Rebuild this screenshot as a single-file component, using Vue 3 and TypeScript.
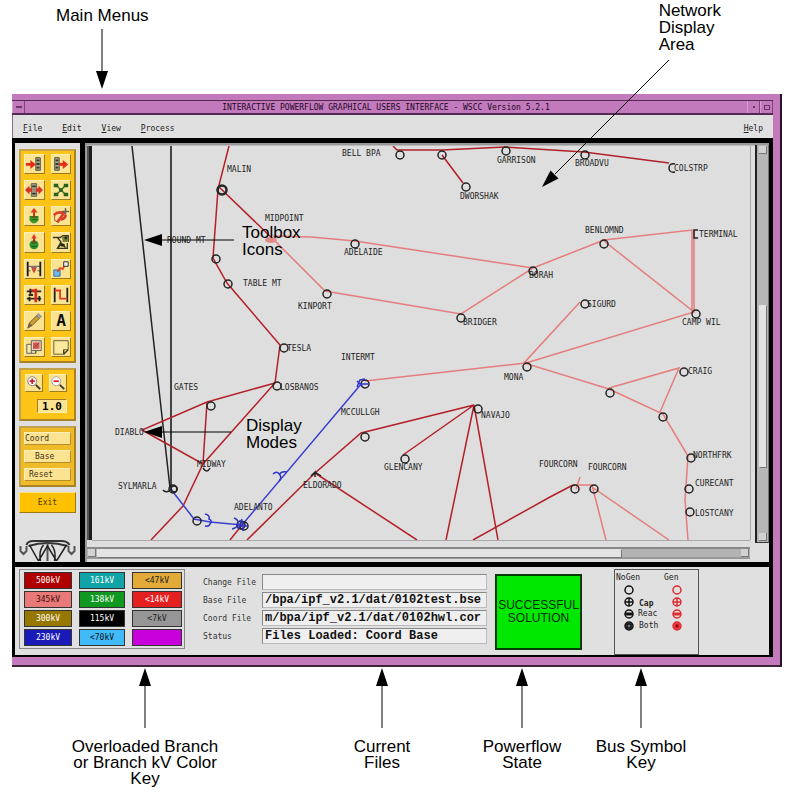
<script setup lang="ts">
interface Label { x: number; y: number; text: string }
interface Branch { kind: string; points: string }

const menus: string[] = ['File', 'Edit', 'View', 'Process']

const branches: Branch[] = [
  { kind: 'dc', points: '132,146 154,345 170,488' },
  { kind: 'dc wide', points: '171,146 171,488' },
  { kind: 'kv500', points: '229,146 218,189 213,258 227,283 280,345 275,383 203,464 183,506 151,540' },
  { kind: 'kv500', points: '219,187 273,239' },
  { kind: 'kv500', points: '275,383 207,402 142,430 203,464 207,402' },
  { kind: 'kv500', points: '393,146 397,150 442,150 505,147 584,152 669,163' },
  { kind: 'kv500', points: '442,155 463,183' },
  { kind: 'kv500', points: '247,540 315,473 361,433 474,405 403,455' },
  { kind: 'kv500', points: '315,473 417,540' },
  { kind: 'kv500', points: '446,540 474,405 498,540' },
  { kind: 'kv500', points: '473,540 550,497 573,485' },
  { kind: 'kv500', points: '230,540 242,525' },
  { kind: 'kv345', points: '273,239 325,291 461,314 533,268 604,240 692,230 692,312' },
  { kind: 'kv345', points: '694,230 694,312' },
  { kind: 'kv345', points: '273,236 311,237 355,241 533,268' },
  { kind: 'kv345', points: '604,241 694,312 526,363 365,381' },
  { kind: 'kv345', points: '580,302 524,363 609,389 663,414 688,456 685,500 688,540' },
  { kind: 'kv345', points: '609,388 679,368 660,412' },
  { kind: 'kv345', points: '573,485 592,485 606,540' },
  { kind: 'kv345', points: '592,487 669,540' },
  { kind: 'kv345', points: '580,477 576,489' },
  { kind: 'kv230', points: '170,488 194,519 210,522 242,525 362,383' },
]

const buses: [number, number][] = [
  [400, 155], [442, 155], [506, 151], [585, 155], [466, 187], [222, 190], [216, 259], [228, 284],
  [355, 244], [327, 294], [533, 271], [461, 318], [604, 244], [585, 304], [696, 314], [527, 367],
  [610, 393], [684, 372], [663, 417], [691, 458], [689, 489], [690, 512], [284, 348], [277, 386],
  [211, 406], [365, 384], [365, 437], [405, 459], [478, 409], [575, 489], [594, 489], [197, 521],
  [244, 526], [173, 489],
]

const labels: Label[] = [
  { x: 342, y: 153, text: 'BELL BPA' }, { x: 497, y: 160, text: 'GARRISON' },
  { x: 575, y: 163, text: 'BROADVU' }, { x: 674, y: 168, text: 'COLSTRP' },
  { x: 699, y: 234, text: 'TERMINAL' }, { x: 460, y: 196, text: 'DWORSHAK' },
  { x: 227, y: 169, text: 'MALIN' }, { x: 265, y: 218, text: 'MIDPOINT' },
  { x: 167, y: 240, text: 'ROUND MT' }, { x: 243, y: 283, text: 'TABLE MT' },
  { x: 344, y: 252, text: 'ADELAIDE' }, { x: 298, y: 306, text: 'KINPORT' },
  { x: 529, y: 275, text: 'BORAH' }, { x: 585, y: 230, text: 'BENLOMND' },
  { x: 587, y: 304, text: 'SIGURD' }, { x: 682, y: 322, text: 'CAMP WIL' },
  { x: 463, y: 322, text: 'BRIDGER' }, { x: 287, y: 348, text: 'TESLA' },
  { x: 280, y: 387, text: 'LOSBANOS' }, { x: 341, y: 357, text: 'INTERMT' },
  { x: 174, y: 387, text: 'GATES' }, { x: 341, y: 412, text: 'MCCULLGH' },
  { x: 504, y: 377, text: 'MONA' }, { x: 688, y: 371, text: 'CRAIG' },
  { x: 481, y: 415, text: 'NAVAJO' }, { x: 115, y: 432, text: 'DIABLO' },
  { x: 197, y: 464, text: 'MIDWAY' }, { x: 118, y: 486, text: 'SYLMARLA' },
  { x: 234, y: 507, text: 'ADELANTO' }, { x: 303, y: 485, text: 'ELDORADO' },
  { x: 384, y: 467, text: 'GLENCANY' }, { x: 539, y: 464, text: 'FOURCORN' },
  { x: 588, y: 467, text: 'FOURCORN' }, { x: 693, y: 455, text: 'NORTHFRK' },
  { x: 695, y: 483, text: 'CURECANT' }, { x: 695, y: 513, text: 'LOSTCANY' },
]

const kvKey: { text: string; tone: string }[] = [
  { text: '500kV', tone: 'k500' }, { text: '161kV', tone: 'k161' }, { text: '<47kV', tone: 'k47' },
  { text: '345kV', tone: 'k345' }, { text: '138kV', tone: 'k138' }, { text: '<14kV', tone: 'k14' },
  { text: '300kV', tone: 'k300' }, { text: '115kV', tone: 'k115' }, { text: '<7kV', tone: 'k7' },
  { text: '230kV', tone: 'k230' }, { text: '<70kV', tone: 'k70' }, { text: '', tone: 'kover' },
]

const files: { id: string; label: string; value: string }[] = [
  { id: 'change', label: 'Change File', value: '' },
  { id: 'base', label: 'Base File', value: '/bpa/ipf_v2.1/dat/0102test.bse' },
  { id: 'coord', label: 'Coord File', value: 'm/bpa/ipf_v2.1/dat/0102hwl.cor' },
  { id: 'status', label: 'Status', value: 'Files Loaded: Coord Base' },
]

const captions: string[][] = [
  ['Overloaded Branch', 'or Branch kV Color', 'Key'],
  ['Current', 'Files'],
  ['Powerflow', 'State'],
  ['Bus Symbol', 'Key'],
]

// Toolbox drawings on a 20 x 20 grid, in reading order
const tools: { name: string; art: string }[] = [
  { name: 'Insert left', art: '<path d="M12 3h5v14h-5z" fill="#aaa98a" stroke="#454538"/><path d="M13 6h3M13 10h3M13 14h3" stroke="#333" stroke-width="2"/><path d="M1 9h5V5.500l6 5-6 5V12H1z" fill="#e62a18"/>' },
  { name: 'Insert right', art: '<path d="M3 3h5v14H3z" fill="#aaa98a" stroke="#454538"/><path d="M4 6h3M4 10h3M4 14h3" stroke="#333" stroke-width="2"/><path d="M8 9h4V5.500l6 5-6 5V12H8z" fill="#e62a18"/>' },
  { name: 'Move', art: '<path d="M7 3h6v14H7z" fill="#aaa98a" stroke="#555547"/><path d="M8 6h4M8 14h4" stroke="#333" stroke-width="2"/><path d="M0 10l5-5v3h3v4H5v3zM20 10l-5-5v3h-3v4h3v3z" fill="#d93324"/><path d="M8 8h4v4H8z" fill="#998c76"/>' },
  { name: 'Network', art: '<path d="M5 5l10 10M15 5L5 15" stroke="#387024" stroke-width="1.500"/><path d="M2 3h5v4H2zM13 3h5v4h-5zM2 13h5v4H2zM13 13h5v4h-5zM8 8h4v4H8z" fill="#25601f"/>' },
  { name: 'Add generator', art: '<path d="M5 10h10v5l-3 3H8l-3-3z" fill="#3d9829"/><path d="M6 11h8M7 14h7" stroke="#1b611b"/><path d="M10 12V5" stroke="#b92516" stroke-width="2"/><path d="M6 6l4-5 4 5z" fill="#e63a20"/>' },
  { name: 'Reroute', art: '<path d="M2 9Q7 4 13 7L6 17M10 14q5-1 5-5" fill="none" stroke="#d8402c" stroke-width="3"/><path d="M3 9v6l4 2" fill="none" stroke="#a5402c"/><path d="M15 1v8M11 5h8" fill="none" stroke="#696452" stroke-width="1.500"/>' },
  { name: 'Add load', art: '<circle cx="10" cy="13" r="5" fill="#2e922c"/><path d="M7 11h6M7 15h6" stroke="#176323"/><path d="M10 11V5" stroke="#b92516" stroke-width="2"/><path d="M7 6l3-5 3 5z" fill="#e63a20"/>' },
  { name: 'Area outline', art: '<path d="M1 5h8l3-2h6v7M6 5l4 5-4 7h11v-6M6 17l5-5M9 10l6 6" fill="none" stroke="#393b20" stroke-width="1.500"/><path d="M11 4h6v6h-5z" fill="#74813b"/><path d="M10 12h4v3h-4zM14 4h3v3h-3z" fill="#252a18"/>' },
  { name: 'Section', art: '<path d="M3 2v16M17 2v16" stroke="#181818" stroke-width="2"/><path d="M3 7h14M3 12h3M14 12h3" stroke="#444"/><path d="M6 7h8l-4 7z" fill="#648199"/><path d="M8 8h4v3l-2 4-2-4z" fill="#d54635"/>' },
  { name: 'Connect buses', art: '<path d="M2 11h7v7H2z" fill="#70b8ed" stroke="#286998"/><path d="M6 13l3-4 3 1 3-6" fill="none" stroke="#e34228" stroke-width="2"/><path d="M13 2h5v5h-5z" fill="#eee" stroke="#222"/>' },
  { name: 'Transformer', art: '<path d="M2 6h16M2 14h16M4 10h5" stroke="#332923" stroke-width="2"/><path d="M12 3v15M7 5h6" stroke="#d82a20" stroke-width="3"/><path d="M6 3v6M5 12v5M16 11v6" stroke="#222" stroke-width="2"/>' },
  { name: 'Line', art: '<path d="M3 2v16M17 2v16" stroke="#222" stroke-width="2"/><path d="M3 5h6v9h8" fill="none" stroke="#e33c24" stroke-width="2"/>' },
  { name: 'Edit', art: '<path d="M3 18l2-6 8-8 3 3-8 8z" fill="#ce9d31" stroke="#6c572f"/><path d="M13 4l2-2 3 3-2 2z" fill="#aaa" stroke="#777"/><path d="M3 18l2-6 3 3z" fill="#756245"/>' },
  { name: 'Text', art: '<text x="10" y="16" text-anchor="middle" font-family="DejaVu Sans Mono, monospace" font-weight="bold" font-size="18" fill="#111">A</text>' },
  { name: 'Copy view', art: '<path d="M2 7h10v10H2z" fill="#f6eaa6" stroke="#555"/><path d="M7 3h11v11H7z" fill="#f7d2bd" stroke="#555"/><path d="M9 5h7v7H9z" fill="#dc5144"/><path d="M9 12l7-7M7 14v3M12 14v3" stroke="#555"/>' },
  { name: 'Note', art: '<path d="M2 3h16v10h-5v5H2z" fill="#fbe99c" stroke="#66562b"/><path d="M13 18l5-5M13 13v5" stroke="#4c401e" stroke-width="1.500"/>' },
]
</script>

<template>
  <div class="page">
    <header class="notes-top">
      <div class="note main-menus">
        <span>Main Menus</span>
        <svg class="down" width="14" height="60" viewBox="0 0 14 60" aria-hidden="true">
          <path d="M7 0v44" stroke="#000" /><path d="M1 42h12L7 60z" />
        </svg>
      </div>
      <div class="note network-note">
        <span>Network</span><span>Display</span><span>Area</span>
        <svg class="diagonal" width="130" height="130" viewBox="0 0 130 130" aria-hidden="true">
          <path d="M128 2L14 116" stroke="#000" /><path d="M1 129L9.500 112.500 17.500 120.500z" />
        </svg>
      </div>
    </header>

    <main class="window">
      <div class="titlebar">
        <button class="wm" type="button" aria-label="Window menu"><i></i></button>
        <h1>INTERACTIVE POWERFLOW GRAPHICAL USERS INTERFACE - WSCC Version 5.2.1</h1>
        <button class="wm" type="button" aria-label="Minimize"><i class="dot"></i></button>
        <button class="wm" type="button" aria-label="Maximize"><i class="square"></i></button>
      </div>
      <nav class="menubar">
        <button v-for="m in menus" :key="m" type="button"><u>{{ m[0] }}</u>{{ m.slice(1) }}</button>
        <button class="help" type="button"><u>H</u>elp</button>
      </nav>

      <div class="body">
        <div class="work">
          <aside class="side">
            <div class="gold toolbox">
              <button v-for="t in tools" :key="t.name" class="tool" type="button" :aria-label="t.name">
                <svg viewBox="0 0 20 20" v-html="t.art"></svg>
              </button>
            </div>
            <div class="gold zoom">
              <button class="tool" type="button" aria-label="Zoom in">
                <svg viewBox="0 0 18 18"><circle cx="7" cy="7" r="5" fill="#fff" stroke="#777" /><path d="M4 7h6M7 4v6" stroke="#d6202c" stroke-width="2" /><path d="M11 11l5 5" stroke="#333" stroke-width="2" /></svg>
              </button>
              <button class="tool" type="button" aria-label="Zoom out">
                <svg viewBox="0 0 18 18"><circle cx="7" cy="7" r="5" fill="#fff" stroke="#999" /><path d="M4 7h6" stroke="#d6202c" stroke-width="2" /><path d="M11 11l5 5" stroke="#333" stroke-width="2" /></svg>
              </button>
              <input class="factor" value="1.0" aria-label="Zoom factor">
            </div>
            <div class="gold modes">
              <button type="button">Coord</button>
              <button class="mid" type="button">Base</button>
              <button class="low" type="button">Reset</button>
            </div>
            <button class="exit" type="button">Exit</button>
            <svg class="logo" viewBox="0 0 56 22" aria-hidden="true">
              <path d="M7 6Q8 2 14 2h28q6 0 8 4M9 7Q28 1 48 7" fill="none" stroke="#333" stroke-width="2" />
              <path d="M1 7v5l3 3 3-3V7M49 7v5l3 3 3-3V7M28 4v18" fill="none" stroke="#555" stroke-width="2" />
              <path d="M10 6l9 16L28 7l9 15 10-16M21 22Q19 12 24 6M35 22Q37 12 32 6" fill="none" stroke="#222" stroke-width="1.500" />
            </svg>
          </aside>

          <section class="display">
            <svg class="map" viewBox="92 146 658 394" role="img" aria-label="Network display">
              <polyline v-for="(b, i) in branches" :key="i" :class="b.kind" :points="b.points" />
              <g class="buses">
                <circle v-for="([cx, cy], i) in buses" :key="i" :cx="cx" :cy="cy" r="4" />
                <circle cx="222" cy="190" r="5" />
                <circle cx="174" cy="489" r="3" />
                <circle cx="241" cy="525" r="4" />
                <path d="M675 164q-6-1-6 4t6 4M698 230h-4v8h4M203 468q4 6 7 0M163 490q3 4 9-1M311 476l4-4v5M315 472l6 4" />
              </g>
              <g class="flow">
                <path d="M205 514q5 1 4 5 4 2 1 5-1 3-5 2M234 518q5 2 4 6-1 4-6 5M242 519l-4 10M273 474q4-4 7 1 2 3-1 6M280 474q1-3 7-2M357 387l3-7 5-1M357 381l6 6M361 384h8M243 521v10M239 526h9" />
              </g>
              <ellipse class="midpoint" cx="271" cy="240" rx="6" ry="3" />
              <text v-for="(l, i) in labels" :key="i" class="bus-name" :x="l.x" :y="l.y + 3">{{ l.text }}</text>
              <g class="callout">
                <path d="M234 240H160M231 432H160" stroke="#000" />
                <path d="M144 240l18-6v12zM144 432l18-6v12z" />
                <text x="242" y="238">Toolbox</text><text x="242" y="255">Icons</text>
                <text x="246" y="431">Display</text><text x="246" y="448">Modes</text>
              </g>
            </svg>
            <div class="vbar" role="scrollbar" aria-orientation="vertical" aria-valuenow="50" aria-label="Vertical scroll">
              <span class="arrow"></span><span class="thumb"></span><span class="arrow"></span>
            </div>
            <div class="hbar" role="scrollbar" aria-orientation="horizontal" aria-valuenow="0" aria-label="Horizontal scroll">
              <span class="arrow"></span><span class="thumb"></span><span class="arrow end"></span>
            </div>
          </section>
        </div>

        <section class="status">
          <div class="kv-key">
            <button v-for="(k, i) in kvKey" :key="i" type="button" :class="k.tone" :aria-label="k.text || 'Overloaded'">{{ k.text }}</button>
          </div>
          <form class="files">
            <template v-for="f in files" :key="f.id">
              <label :for="f.id">{{ f.label }}</label>
              <input :id="f.id" :value="f.value" readonly>
            </template>
          </form>
          <output class="solution"><span>SUCCESSFUL</span><span>SOLUTION</span></output>
          <svg class="symbols" width="85" height="86" viewBox="0 0 85 86">
            <rect x="0.500" y="0.500" width="84" height="85" fill="none" stroke="#555" />
            <text x="2" y="11">NoGen</text><text x="50" y="11">Gen</text>
            <text x="25" y="37" class="strong">Cap</text><text x="24" y="47">Reac</text><text x="25" y="59">Both</text>
            <g fill="none" stroke="#111" stroke-width="1.500">
              <circle cx="15" cy="21" r="4" /><circle cx="15" cy="33" r="4" /><path d="M15 29v8M11 33h8" />
              <circle cx="15" cy="45" r="4" /><path d="M11 45h8" stroke-width="3" />
              <circle cx="15" cy="57" r="4" fill="#777" /><path d="M13 55h4v4h-4z" />
            </g>
            <g fill="none" stroke="#e02a30" stroke-width="1.500">
              <circle cx="63" cy="21" r="4" /><circle cx="63" cy="33" r="4" /><path d="M63 29v8M59 33h8" />
              <circle cx="63" cy="45" r="4" /><path d="M59 45h8" stroke-width="3" />
              <circle cx="63" cy="57" r="4" fill="#ed8080" /><path d="M61 55h4v4h-4z" fill="#900" />
            </g>
          </svg>
        </section>
      </div>
    </main>

    <footer class="notes-bottom">
      <div v-for="(c, i) in captions" :key="i" class="note">
        <svg width="14" height="60" viewBox="0 0 14 60" aria-hidden="true">
          <path d="M7 16v44" stroke="#000" /><path d="M1 18h12L7 0z" />
        </svg>
        <span v-for="line in c" :key="line">{{ line }}</span>
      </div>
    </footer>
  </div>
</template>

<style>
body { background: #fff; }
</style>

<style scoped>
.page { font-family: "Liberation Sans", Arial, sans-serif; color: #000; overflow: hidden; }
button, input { font: inherit; color: inherit; margin: 0; padding: 0; border: 0; border-radius: 0; min-width: 0; box-sizing: border-box; }
svg { display: block; }

.note { display: flex; flex-direction: column; font-size: 17px; line-height: 17px; }
.notes-top { display: flex; justify-content: space-between; height: 94px; }
.main-menus { align-items: center; gap: 5px; padding: 7px 0 0 56px; }
.network-note { position: relative; padding: 2px 71px 0 0; }
.diagonal { position: absolute; z-index: 1; top: 58px; left: -118px; }

.window { margin: 0 10px 0 12px; padding: 6px 7px 8px 0; background: #c37abc; border-right: 2px solid #2c1029; border-bottom: 2px solid #3c2539; font-family: "DejaVu Sans Mono", "Liberation Mono", monospace; font-size: 8px; }
.titlebar { display: flex; align-items: stretch; height: 12px; border-top: 1px solid #542a50; border-bottom: 2px solid #542a50; }
.titlebar h1 { flex: 1; margin: 0; text-align: center; font-size: 8px; font-weight: 400; line-height: 14px; color: #22071f; }
.wm { width: 13px; background: #c37abc; border-right: 1px solid #7f457a; border-left: 1px solid #d99bd3; display: grid; place-items: center; }
.wm i { width: 6px; height: 2px; background: #6d3768; }
.wm .dot { width: 2px; }
.wm .square { height: 5px; border: 1px solid #6d3768; background: none; box-sizing: border-box; }
.menubar { display: flex; gap: 20px; height: 23px; padding: 3px 10px 0; background: #e0e0e0; border-left: 1px solid #8e6a8a; box-sizing: border-box; color: #222; }
.menubar button { background: none; }
.menubar u { text-underline-offset: 1px; }
.help { margin-left: auto; }

.body { display: flex; flex-direction: column; gap: 5px; background: #000; padding: 5px 4px 2px 3px; }
.work { display: flex; gap: 5px; }
.side { display: flex; flex-direction: column; gap: 5px; width: 65px; box-sizing: border-box; padding: 6px 4px 1px; background: #e0e0e0; }
.gold { background: #fcc417; border: 2px solid; border-color: #c3a04a #a98225 #a98225 #c3a04a; display: grid; }
.toolbox { flex: 1; grid-template-columns: 1fr 1fr; grid-auto-rows: 1fr; gap: 6px; padding: 3px 3px 4px; }
.tool { background: #fce392; border: 1px solid; border-color: #fff0b8 #9c7b20 #9c7b20 #fff0b8; display: grid; place-items: center; overflow: hidden; }
.toolbox .tool { min-height: 0; height: 100%; }
.toolbox svg { width: 18px; height: 18px; }
.zoom { grid-template-columns: 18px 18px; justify-content: start; gap: 7px 6px; padding: 4px 4px 6px; }
.zoom .tool { height: 18px; }
.zoom svg { width: 16px; height: 16px; }
.factor { grid-column: 1 / -1; justify-self: end; width: 30px; height: 14px; text-align: center; font: bold 11px "DejaVu Sans Mono", monospace; background: #fce392; border: 1px solid; border-color: #a17f25 #fff0b8 #fff0b8 #a17f25; }
.modes { gap: 5px; padding: 4px 3px; background: #f0bb29; }
.modes button { height: 13px; text-align: left; background: #fce392; border: 1px solid; border-color: #fff0b8 #b48f2b #b48f2b #fff0b8; color: #443512; }
.modes .mid { padding-left: 10px; }
.modes .low { padding-left: 4px; }
.exit { height: 21px; background: #fdc100; border: 1px solid; border-color: #ffe27c #a07c10 #a07c10 #ffe27c; color: #4d3a05; }
.logo { width: 100%; height: 22px; margin-top: 21px; }

.display { flex: 1; min-width: 0; display: grid; grid-template-columns: 7px minmax(0, 1fr) 5px 14px; grid-template-rows: 3px auto 7px 12px 3px; background: linear-gradient(90deg, #999 2px, transparent 2px), linear-gradient(#999 2px, #dedede 3px); }
.map { grid-area: 2 / 2; width: 100%; box-shadow: 0 1px #aaa, 1px 0 #aaa, -3px 0 #1c1c1c, -5px 0 #555; }
.vbar { grid-area: 1 / 4 / 4 / 5; display: flex; flex-direction: column; margin: 2px 0 4px; padding: 1px 2px; background: #b6b6b6; border-left: 2px solid #222; border-right: 1px solid #777; border-bottom: 1px solid #333; }
.vbar .thumb { margin: 151px 0 66px; flex: 1; }
.hbar { grid-area: 4 / 1 / 5 / 3; display: flex; margin-left: 2px; box-sizing: border-box; background: #b3b3b3; border-top: 2px solid #888; border-bottom: 2px solid #999; }
.thumb { background: #e4e4e4; box-shadow: 1px 1px #777; }
.hbar .thumb { flex: 1; margin-right: 119px; }
.arrow { width: 8px; height: 8px; background: #d2d2d2; box-shadow: inset -1px -1px #777; align-self: center; }
.hbar .arrow { margin: 0 1px; }

polyline { fill: none; stroke-width: 1.5; }
.kv500 { stroke: #b32029; }
.kv345 { stroke: #e57d7d; }
.kv230 { stroke: #3940cf; }
.dc { stroke: #222; }
.wide { stroke: #444; stroke-width: 2; }
.buses { fill: none; stroke: #222; stroke-width: 1.5; }
.flow { fill: none; stroke: #3036c8; stroke-width: 1.5; }
.midpoint { fill: #e58b86; }
.bus-name { font-size: 8px; fill: #222; }
.callout { font-family: "Liberation Sans", Arial, sans-serif; font-size: 17px; }

.status { display: flex; align-items: flex-start; height: 88px; box-sizing: border-box; padding: 2px 0 0 4px; background: #e0e0e0; }
.kv-key { display: grid; grid-template-columns: 48px 46px 50px; grid-auto-rows: 17px; column-gap: 7px; row-gap: 2px; padding: 2px 2px 2px 4px; border: 1px solid #888; margin-right: 18px; }
.kv-key button { border: 1px solid #333; color: #fff; line-height: 15px; }
.kv-key .k500 { background: #b00000; }
.kv-key .k161 { background: #10a4a8; }
.kv-key .k47 { background: #e3aa38; color: #222; }
.kv-key .k345 { background: #e97878; color: #3b1010; }
.kv-key .k138 { background: #109820; }
.kv-key .k14 { background: #e52020; }
.kv-key .k300 { background: #967800; }
.kv-key .k115 { background: #000; }
.kv-key .k7 { background: #969696; color: #222; }
.kv-key .k230 { background: #1a1ab8; }
.kv-key .k70 { background: #40baf8; color: #111; }
.kv-key .kover { background: #c800dc; }
.files { flex: 1; display: grid; grid-template-columns: 53px 1fr; grid-auto-rows: 16px; gap: 2px 6px; align-items: center; padding-top: 5px; color: #333; }
.files label { white-space: nowrap; }
.files input { height: 16px; width: 100%; padding: 0 2px; background: #efefef; border: 1px solid; border-color: #888 #bbb #bbb #888; color: #111; font: bold 12px "Liberation Mono", monospace; }
.solution { display: flex; flex-direction: column; align-items: center; justify-content: center; width: 87px; height: 76px; margin: 5px 32px 0 8px; box-sizing: border-box; background: #00e800; border: 2px solid #063c06; color: #042c04; font: 12px/13px "Liberation Sans", Arial, sans-serif; }
.symbols { margin-right: 70px; }
.symbols text { font-size: 8px; fill: #222; }
.symbols .strong { font-weight: bold; }

.notes-bottom { display: grid; grid-template-columns: 290fr 184fr 96fr 142fr 80fr; padding-top: 1px; }
.notes-bottom .note { align-items: center; white-space: nowrap; line-height: 16px; }
.notes-bottom svg { margin-bottom: 11px; }
</style>
